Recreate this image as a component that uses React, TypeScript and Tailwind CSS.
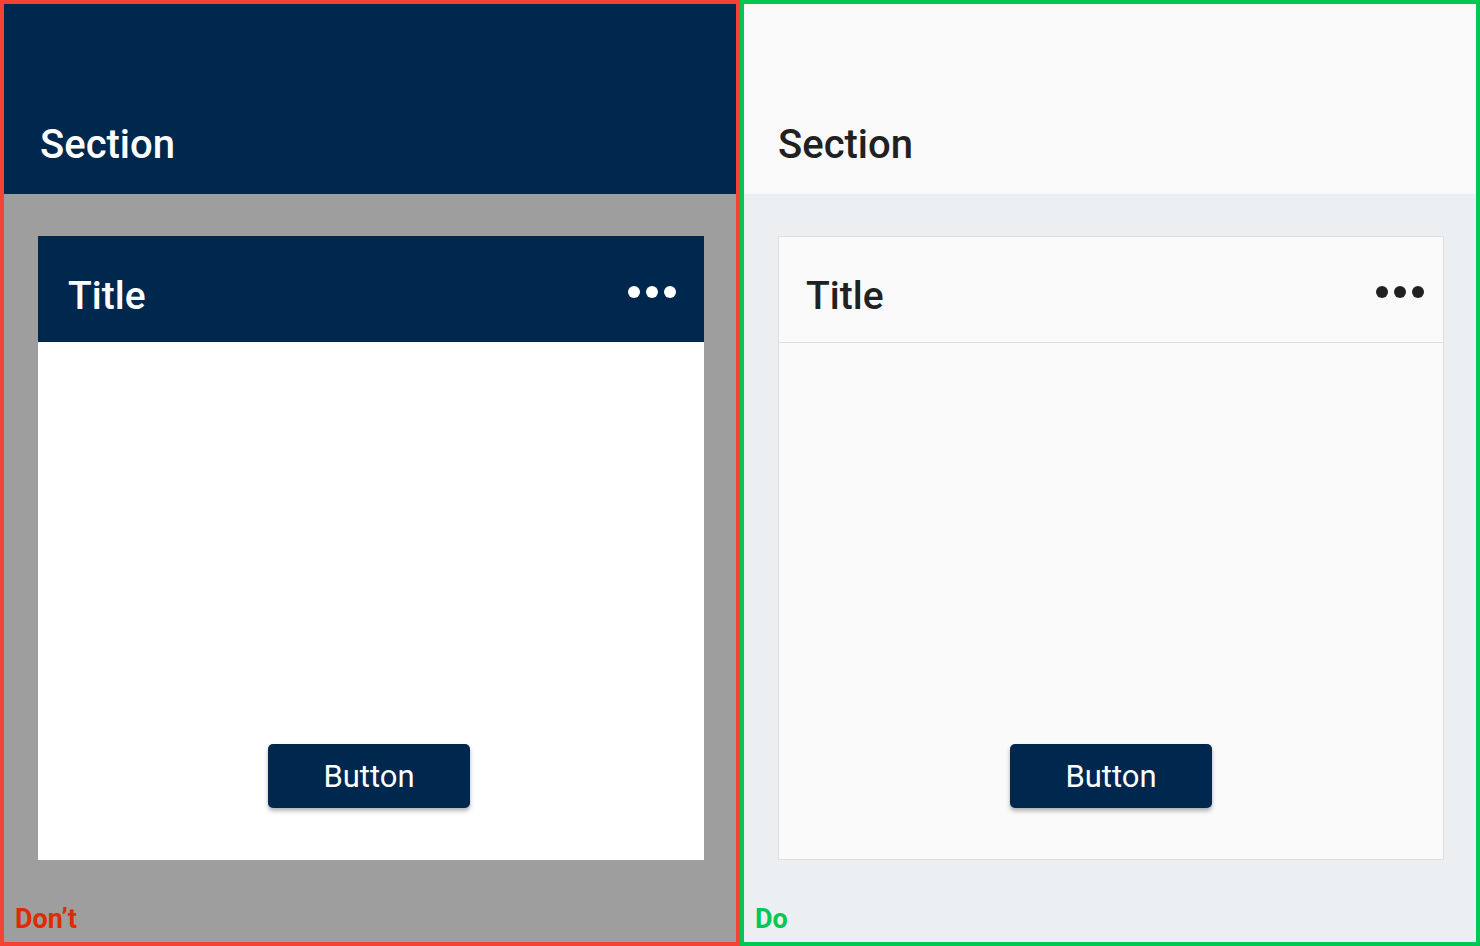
const navy = 'bg-[#00274e]';

type PanelProps = { good: boolean };

function Dots({ good }: PanelProps) {
  const c = good ? 'bg-[#212121]' : 'bg-white';
  return (
    <div className="mt-[9px] flex gap-[6px]">
      <span className={`h-3 w-3 rounded-full ${c}`} />
      <span className={`h-3 w-3 rounded-full ${c}`} />
      <span className={`h-3 w-3 rounded-full ${c}`} />
    </div>
  );
}

function Panel({ good }: PanelProps) {
  return (
    <div
      className={`flex h-[946px] w-[740px] flex-col border-4 ${
        good ? 'border-[#00c853]' : 'border-[#f44336]'
      }`}
    >
      <div
        className={`h-[190px] pt-[121px] ${
          good ? 'bg-[#f9f9f9] px-[34px] text-[#212121]' : `${navy} px-9 text-white`
        }`}
      >
        <h1 className="text-[40px] font-medium leading-none">Section</h1>
      </div>

      <div className={`flex flex-1 flex-col ${good ? 'bg-[#eceff1]' : 'bg-[#9e9e9e]'}`}>
        <div
          className={`ml-[34px] mt-[42px] flex h-[624px] w-[666px] flex-col ${
            good ? 'border border-[#e0e0e0] bg-[#fafafa]' : 'bg-white'
          }`}
        >
          <div
            className={`flex h-[106px] shrink-0 items-start justify-between ${
              good
                ? 'border-b border-[#e0e0e0] pl-[27px] pr-[19px] pt-[40px] text-[#212121]'
                : `${navy} pl-[30px] pr-[28px] pt-[41px] text-white`
            }`}
          >
            <h2 className="text-[39px] font-medium leading-none">Title</h2>
            <Dots good={good} />
          </div>
          <div
            className={`flex flex-1 items-end justify-center ${
              good ? 'pb-[51px]' : 'pb-[52px] pr-[4px]'
            }`}
          >
            <button
              className={`h-16 w-[202px] rounded-[5px] ${navy} text-[31px] leading-none text-white shadow-[0_3px_4px_rgba(0,0,0,0.3)]`}
            >
              Button
            </button>
          </div>
        </div>
        <div
          className={`ml-[11px] mt-[46px] text-[27px] font-bold leading-none ${
            good ? 'text-[#00c853]' : 'text-[#dd2c00]'
          }`}
        >
          {good ? 'Do' : 'Don’t'}
        </div>
      </div>
    </div>
  );
}

export default function App() {
  return (
    <div className="flex h-[946px] w-[1480px] font-['Roboto',sans-serif]">
      <Panel good={false} />
      <Panel good />
    </div>
  );
}
